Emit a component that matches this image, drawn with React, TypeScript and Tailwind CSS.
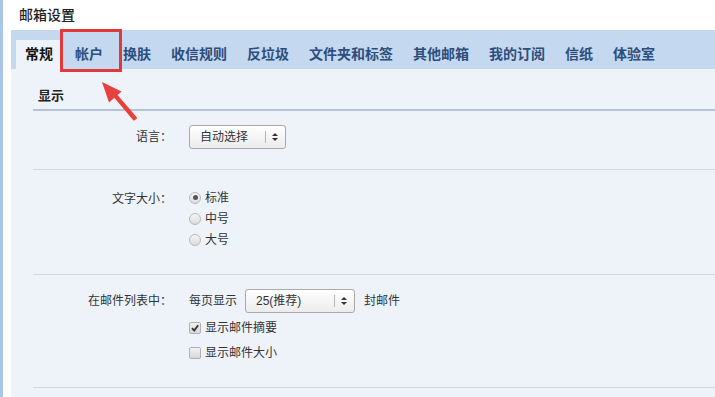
import React from 'react';

const TABS = ["常规", "帐户", "换肤", "收信规则", "反垃圾", "文件夹和标签", "其他邮箱", "我的订阅", "信纸", "体验室"];

function SelectBox({ label, width }: { label: string; width: string }) {
  return (
    <div className={`flex h-[24px] items-center rounded-[3px] border border-[#a9a9a9] bg-gradient-to-b from-white to-[#ececec] ${width}`}>
      <span className="flex-1 pl-[10px] text-[12px] leading-none text-[#333]">{label}</span>
      <span className="h-[12px] w-px bg-[#b5b5b5]" />
      <svg width="18" height="12" viewBox="0 0 18 12" className="mr-[1px]">
        <path d="M6 5 L9 2 L12 5 Z" fill="#333" />
        <path d="M6 7 L9 10 L12 7 Z" fill="#333" />
      </svg>
    </div>
  );
}

function Radio({ checked, label }: { checked?: boolean; label: string }) {
  return (
    <div className="flex h-[21px] items-center">
      <span className="flex h-[12px] w-[12px] items-center justify-center rounded-full border border-[#b8b8b8] bg-gradient-to-b from-[#f6f6f6] to-[#dcdcdc]">
        {checked && <span className="h-[5px] w-[5px] rounded-full bg-[#555]" />}
      </span>
      <span className="ml-[4px] text-[12px] text-[#333]">{label}</span>
    </div>
  );
}

function Check({ checked, label }: { checked?: boolean; label: string }) {
  return (
    <div className="flex h-[25px] items-center">
      <span className="flex h-[12px] w-[12px] items-center justify-center rounded-[2px] border border-[#b0b0b0] bg-gradient-to-b from-[#f2f2f2] to-[#d8d8d8]">
        {checked && (
          <svg width="10" height="10" viewBox="0 0 10 10">
            <path d="M2 5.2 L4.2 7.5 L8.2 2.2" stroke="#333" strokeWidth="1.8" fill="none" />
          </svg>
        )}
      </span>
      <span className="ml-[4px] text-[12px] text-[#333]">{label}</span>
    </div>
  );
}

function Row({ label, children, className }: { label: string; children: React.ReactNode; className: string }) {
  return (
    <div className={`flex border-b border-[#cfd8e3] ${className}`}>
      <div className="w-[139px] shrink-0 text-right text-[12px] leading-[24px] text-[#333]">{label}</div>
      <div className="ml-[17px]">{children}</div>
    </div>
  );
}

export default function App() {
  return (
    <div
      className="relative h-[397px] w-[715px] overflow-hidden bg-white"
      style={{ fontFamily: '"Liberation Sans", "Noto Sans CJK SC", sans-serif' }}
    >
      <div className="flex h-full">
        <div className="w-[3px] shrink-0 bg-[#a9c6e8]" />
        <div className="flex flex-1 flex-col pl-[8px]">
          <div className="h-[30px] pl-[8px] pt-[6px] text-[14px] font-medium leading-[18px] text-[#222]">邮箱设置</div>

          {/* tabs */}
          <div className="flex h-[39px] items-end gap-[2px] bg-[#c4d8f0] pl-[5px]">
            {TABS.map((t, i) => (
              <div
                key={t}
                className={`flex h-[29px] items-center px-[9px] text-[14px] font-bold ${
                  i === 0 ? 'bg-[#eef3fa] text-[#111]' : 'text-[#2d4e7b]'
                } ${i === 1 ? 'ml-[2px]' : ''}`}
              >
                {t}
              </div>
            ))}
          </div>

          <div className="flex-1 bg-[#eef3fa] pl-[22px]">
            <div className="border-b-2 border-[#b4c4d6] pb-[5px] pl-[5px] pt-[18px] text-[13px] font-bold leading-[17px] text-[#222]">
              显示
            </div>

            <Row label="语言：" className="pb-[20px] pt-[14px]">
              <SelectBox label="自动选择" width="w-[97px]" />
            </Row>

            <Row label="文字大小：" className="pb-[24px] pt-[17px]">
              <Radio checked label="标准" />
              <Radio label="中号" />
              <Radio label="大号" />
            </Row>

            <Row label="在邮件列表中：" className="pb-[22px] pt-[14px]">
              <div className="flex items-center text-[12px] text-[#333]">
                <span>每页显示</span>
                <div className="ml-[8px]">
                  <SelectBox label="25(推荐)" width="w-[110px]" />
                </div>
                <span className="ml-[9px]">封邮件</span>
              </div>
              <div className="mt-[2px]">
                <Check checked label="显示邮件摘要" />
                <Check label="显示邮件大小" />
              </div>
            </Row>
          </div>
        </div>
      </div>

      {/* highlight box */}
      <div className="pointer-events-none absolute left-[60px] top-[29px] h-[43px] w-[62px] border-[3px] border-[#e0383b]" />

      {/* arrow */}
      <svg className="pointer-events-none absolute left-0 top-0" width="715" height="397" viewBox="0 0 715 397">
        <path d="M112.5 94 L117 96 L136 118 L134 119.5 Z" fill="#e8403c" stroke="#e8403c" strokeWidth="2" strokeLinejoin="round" />
        <path d="M102 82 L121.5 91.5 L109 102.5 Z" fill="#e8403c" />
      </svg>
    </div>
  );
}
